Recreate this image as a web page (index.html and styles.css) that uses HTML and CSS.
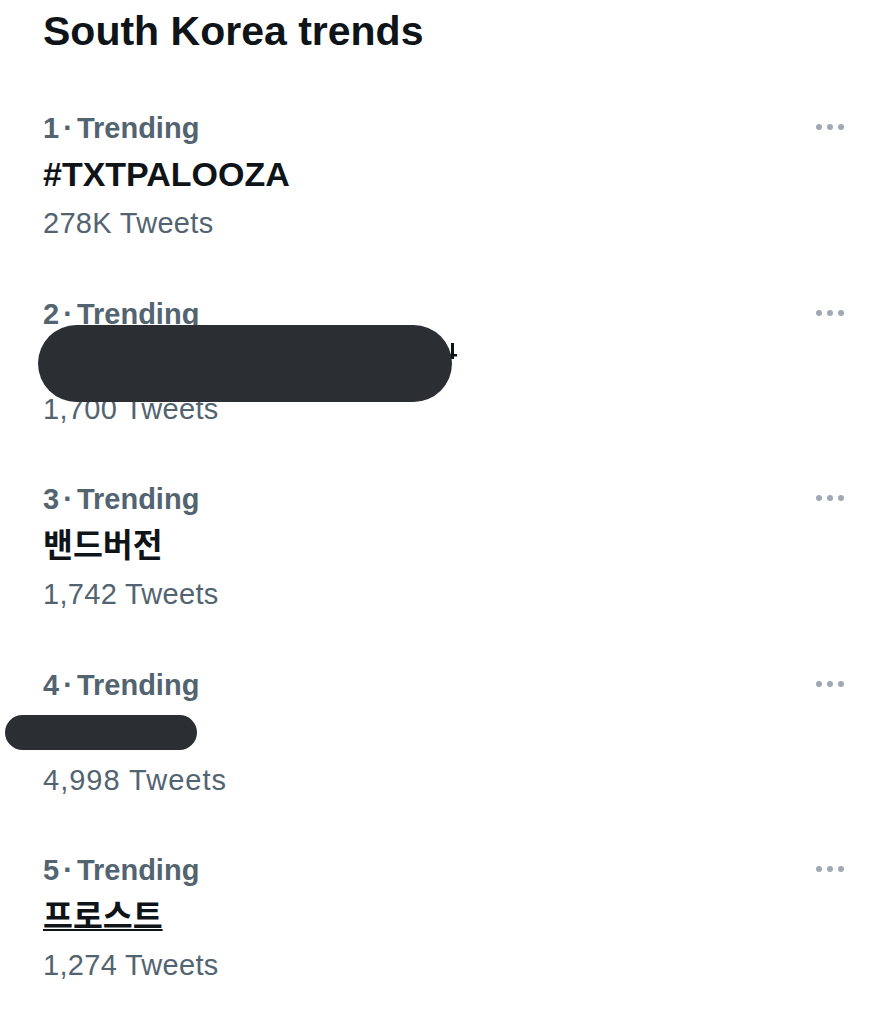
FILE: index.html
```html
<!DOCTYPE html>
<html lang="en">
<head>
<meta charset="utf-8">
<title>South Korea trends</title>
<link rel="stylesheet" href="styles.css">
</head>
<body>
<div class="page">
  <h1 class="title">South Korea trends</h1>
  <div class="list">
    <div class="trend">
      <div class="info">
        <div class="meta">1 · Trending</div>
        <div class="name">#TXTPALOOZA</div>
        <div class="count">278K Tweets</div>
      </div>
      <svg class="more" viewBox="0 0 28 6"><circle cx="3" cy="3" r="3"/><circle cx="14" cy="3" r="3"/><circle cx="25" cy="3" r="3"/></svg>
    </div>
    <div class="trend">
      <div class="info">
        <div class="meta">2 · Trending</div>
        <div class="name">&nbsp;</div>
        <div class="count">1,700 Tweets</div>
      </div>
      <svg class="more" viewBox="0 0 28 6"><circle cx="3" cy="3" r="3"/><circle cx="14" cy="3" r="3"/><circle cx="25" cy="3" r="3"/></svg>
      <svg class="glimpse" viewBox="0 0 14 18"><rect x="7" y="0" width="3" height="16"/><rect x="0" y="11" width="13" height="2.5"/></svg>
      <div class="redact redact-wide"></div>
    </div>
    <div class="trend">
      <div class="info">
        <div class="meta">3 · Trending</div>
        <div class="name"><span class="ko">밴드버전</span></div>
        <div class="count">1,742 Tweets</div>
      </div>
      <svg class="more" viewBox="0 0 28 6"><circle cx="3" cy="3" r="3"/><circle cx="14" cy="3" r="3"/><circle cx="25" cy="3" r="3"/></svg>
    </div>
    <div class="trend">
      <div class="info">
        <div class="meta">4 · Trending</div>
        <div class="name">&nbsp;</div>
        <div class="count wide">4,998 Tweets</div>
      </div>
      <svg class="more" viewBox="0 0 28 6"><circle cx="3" cy="3" r="3"/><circle cx="14" cy="3" r="3"/><circle cx="25" cy="3" r="3"/></svg>
      <div class="redact redact-small"></div>
    </div>
    <div class="trend">
      <div class="info">
        <div class="meta">5 · Trending</div>
        <div class="name"><span class="ko link">프로스트</span></div>
        <div class="count">1,274 Tweets</div>
      </div>
      <svg class="more" viewBox="0 0 28 6"><circle cx="3" cy="3" r="3"/><circle cx="14" cy="3" r="3"/><circle cx="25" cy="3" r="3"/></svg>
    </div>
  </div>
</div>
</body>
</html>
```

FILE: styles.css
```css
body {
  margin: 0;
  background: #ffffff;
  font-family: "Liberation Sans", Arial, sans-serif;
}

.title {
  margin: 0;
  padding: 7px 0 0 43px;
  font-size: 41px;
  line-height: 48px;
  font-weight: 700;
  color: #0f1419;
}

.list {
  margin-top: 28px;
}

.trend {
  position: relative;
  display: flex;
  justify-content: space-between;
  align-items: flex-start;
  padding: 26px 47px 26.5px 43px;
}

.meta {
  font-size: 29px;
  line-height: 38px;
  font-weight: 700;
  color: #536471;
  word-spacing: -4px;
}

.name {
  font-size: 34px;
  line-height: 54px;
  font-weight: 700;
  color: #0f1419;
}

.count {
  margin-top: 3px;
  font-size: 29px;
  line-height: 38px;
  color: #536471;
  letter-spacing: 0.3px;
}

.count.wide {
  letter-spacing: 1px;
}

.ko {
  font-family: "Noto Sans CJK KR", sans-serif;
  font-size: 32.5px;
  line-height: 30px;
}

.link {
  text-decoration: underline;
  text-decoration-thickness: 2px;
}

.more {
  margin-top: 15px;
  width: 28px;
  height: 6px;
  fill: #9ea9b3;
}

.redact {
  position: absolute;
  background: #2b2e32;
}

.redact-wide {
  top: 56.5px;
  left: 38px;
  width: 414px;
  height: 77px;
  border-radius: 38.5px;
}

.redact-small {
  top: 75.5px;
  left: 5px;
  width: 192px;
  height: 35px;
  border-radius: 17.5px;
}

.glimpse {
  position: absolute;
  top: 74.5px;
  left: 444px;
  width: 14px;
  height: 18px;
  fill: #0f1419;
}
```
